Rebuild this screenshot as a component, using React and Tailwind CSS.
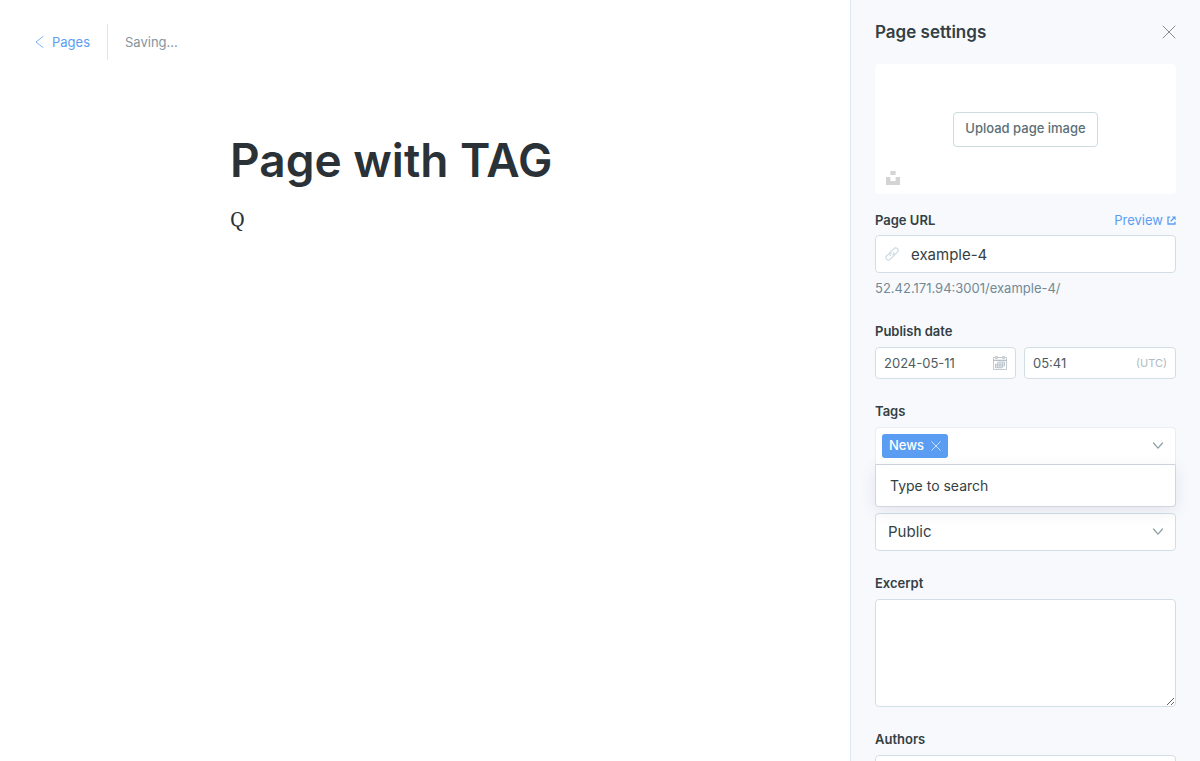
import { useState } from "react";

const label = "block text-[13px] leading-5 font-semibold text-[#343f44]";
const field = "rounded-[4px] border border-[#d2dee6] bg-white outline-none";

function ChevronDown() {
  return (
    <svg className="pointer-events-none h-3 w-3 shrink-0 text-[#8b9ca5]" viewBox="0 0 12 12" fill="none" stroke="currentColor" strokeWidth="1.200" strokeLinecap="round" strokeLinejoin="round" aria-hidden="true">
      <path d="M1.5 3 6 8.200 10.500 3" />
    </svg>
  );
}

function Cross({ className }) {
  return (
    <svg className={className} viewBox="0 0 14 14" fill="none" stroke="currentColor" strokeLinecap="round" aria-hidden="true">
      <path d="M1 1l12 12M13 1 1 13" />
    </svg>
  );
}

function LinkIcon() {
  return (
    <svg className="h-[14px] w-[14px] shrink-0 text-[#cbd8e1]" viewBox="0 0 24 24" fill="none" stroke="currentColor" strokeWidth="1.9" strokeLinecap="round" strokeLinejoin="round" aria-hidden="true">
      <path d="M9.500 14.500a4.300 4.300 0 0 1 0-6l5.800-5.800a4.250 4.250 0 0 1 6 6l-3.600 3.600a4.300 4.300 0 0 1-4.600 1" />
      <path d="M14.500 9.500a4.300 4.300 0 0 1 0 6l-5.800 5.800a4.250 4.250 0 0 1-6-6l3.600-3.600a4.300 4.300 0 0 1 4.600-1" />
    </svg>
  );
}

function CalendarIcon() {
  return (
    <svg className="h-[14px] w-[14px] shrink-0 text-[#9aa9b1]" viewBox="0 0 14 14" fill="none" stroke="currentColor" strokeWidth="0.6" aria-hidden="true">
      <path d="M.5 1.500h13v12H.5z" />
      <path d="M.5 4.300h13" strokeWidth="0.900" />
      <path d="M2.800.3h1.400v2.400H2.800zM9.800.3h1.400v2.400H9.800z" fill="white" />
      <path d="M4.500 6h7.200M2.300 8.200h9.400M2.300 10h9.400M2.300 11.800h7M2.500 8v4M4.700 6v6M7 6v6M9.300 6v6M11.500 6v4" />
    </svg>
  );
}

function ImageUploader() {
  return (
    <div className="relative flex h-[130px] items-center justify-center rounded-[4px] bg-white">
      <button type="button" className="h-[35px] rounded-[4px] border border-[#cddae1] bg-white px-[11px] text-[13px] font-medium text-[#5b7078]">
        Upload page image
      </button>
      <button type="button" aria-label="Unsplash" className="absolute bottom-[9px] left-[11px]">
        <svg className="h-[14px] w-[14px] text-[#d4d4d4]" viewBox="0 0 14 14" fill="currentColor" aria-hidden="true">
          <path d="M4.400 0h5.200v4H4.400zM0 6h4.400v4h5.200V6H14v8H0z" />
        </svg>
      </button>
    </div>
  );
}

function TagPicker() {
  const [tags, setTags] = useState(["News"]);
  return (
    <div>
      <label htmlFor="tags" className={`${label} mb-[6px]`}>Tags</label>
      <div className="relative">
        <div className="flex h-[38px] items-center gap-1 rounded-t-[4px] border border-[#e8eef3] border-b-[#d0d5e0] bg-white pr-[11px] pl-[6px]">
          {tags.map((tag) => (
            <span key={tag} className="flex h-6 items-center gap-[7px] rounded-[3px] bg-[#5a9df2] px-[7px] text-[13px] font-medium text-white">
              {tag}
              <button type="button" aria-label={`Remove ${tag}`} onClick={() => setTags(tags.filter((t) => t !== tag))}>
                <Cross className="h-[10px] w-[10px] text-white" />
              </button>
            </span>
          ))}
          <input id="tags" role="combobox" aria-expanded="true" aria-controls="tag-options" className="h-6 w-0 min-w-0 flex-1 bg-transparent text-[15px] outline-none" />
          <ChevronDown />
        </div>
        <div id="tag-options" role="listbox" className="absolute inset-x-0 top-full z-10 flex h-[42px] items-center rounded-b-[4px] border border-t-0 border-[#d0d5e0] bg-white px-[14px] text-[14px] text-[#343f44] shadow-[0_4px_16px_rgba(70,80,100,0.12)]">
          Type to search
        </div>
      </div>
    </div>
  );
}

function SettingsPanel() {
  return (
    <aside className="w-[350px] shrink-0 overflow-y-auto border-l border-[#dfe8f3] bg-[#f7f9fd] px-6 [scrollbar-width:none]">
      <header className="flex h-16 items-center justify-between">
        <h2 className="text-[17px] leading-6 font-semibold text-[#343f44]">Page settings</h2>
        <button type="button" aria-label="Close">
          <Cross className="h-[14px] w-[14px] text-[#858b90]" />
        </button>
      </header>

      <ImageUploader />

      <form className="mt-4 flex flex-col gap-[22px]" onSubmit={(e) => e.preventDefault()}>
        <div>
          <div className="mb-[5px] flex items-center justify-between">
            <label htmlFor="url" className={label}>Page URL</label>
            <a href="#preview" className="flex items-center gap-1 text-[13px] leading-5 text-[#5a9df2]">
              Preview
              <svg className="h-[9px] w-[9px]" viewBox="0 0 9 9" fill="none" stroke="currentColor" strokeWidth="1.300" aria-hidden="true">
                <path d="M3.200 1.200H1v6.800h7V5.800M7 2 3.700 5.300" />
                <path d="M4.800.4h3.800v3.800z" fill="currentColor" stroke="none" />
              </svg>
            </a>
          </div>
          <div className={`${field} flex h-[38px] items-center gap-3 px-[9px]`}>
            <LinkIcon />
            <input id="url" defaultValue="example-4" className="h-9 min-w-0 flex-1 bg-transparent text-[15px] text-[#343f44] outline-none" />
          </div>
          <p className="mt-1 text-[13px] leading-[22px] text-[#738a94]">52.42.171.94:3001/example-4/</p>
        </div>

        <div>
          <label htmlFor="date" className={`${label} mb-[6px]`}>Publish date</label>
          <div className="flex gap-2">
            <div className={`${field} flex h-8 w-[141px] items-center px-2`}>
              <input id="date" defaultValue="2024-05-11" className="h-[30px] min-w-0 flex-1 bg-transparent text-[13px] text-[#4d5b61] outline-none" />
              <CalendarIcon />
            </div>
            <div className={`${field} flex h-8 min-w-0 flex-1 items-center px-2`}>
              <input aria-label="Publish time" defaultValue="05:41" className="h-[30px] min-w-0 flex-1 bg-transparent text-[13px] text-[#4d5b61] outline-none" />
              <span className="text-[11px] text-[#aebbc2]">(UTC)</span>
            </div>
          </div>
        </div>

        <TagPicker />

        <div className="mt-[26px] flex items-center">
          <select aria-label="Page access" defaultValue="Public" className={`${field} h-[38px] w-full appearance-none px-3 text-[15px] text-[#343f44]`}>
            <option>Public</option>
            <option>Members only</option>
          </select>
          <span className="pointer-events-none -ml-6">
            <ChevronDown />
          </span>
        </div>

        <div>
          <label htmlFor="excerpt" className={`${label} mb-[6px]`}>Excerpt</label>
          <textarea id="excerpt" className={`${field} block h-[108px] w-full resize-y p-3 text-[15px] text-[#343f44]`} />
        </div>

        <div>
          <label htmlFor="authors" className={`${label} mb-[6px]`}>Authors</label>
          <input id="authors" className={`${field} h-[38px] w-full px-3 text-[15px] text-[#343f44]`} />
        </div>
      </form>
    </aside>
  );
}

export default function App() {
  return (
    <div className="flex h-screen overflow-hidden bg-white font-['Inter',sans-serif] antialiased">
      <main className="min-w-0 flex-1">
        <header className="flex h-[84px] items-center px-[35px]">
          <a href="#pages" className="flex items-center gap-2 text-[13px] leading-9 text-[#5a9df2]">
            <svg className="h-3 w-[9px]" viewBox="0 0 9 12" fill="none" stroke="currentColor" strokeWidth="0.8" strokeLinecap="round" strokeLinejoin="round" aria-hidden="true">
              <path d="M8 .5 1 6l7 5.500" />
            </svg>
            Pages
          </a>
          <span className="ml-[17px] h-9 border-l border-[#dde6ec] pl-[17px] text-[13px] leading-9 text-[#8495a0]">Saving...</span>
        </header>
        <article className="pt-[48px] pr-[230px] pl-[230px]">
          <h1 className="text-[46px] leading-[56px] font-semibold whitespace-nowrap text-[#2a3237]">Page with TAG</h1>
          <p className="mt-[15px] font-['Noto_Serif','Liberation_Serif',serif] text-[20px] leading-8 text-[#2a3237]">Q</p>
        </article>
      </main>
      <SettingsPanel />
    </div>
  );
}
